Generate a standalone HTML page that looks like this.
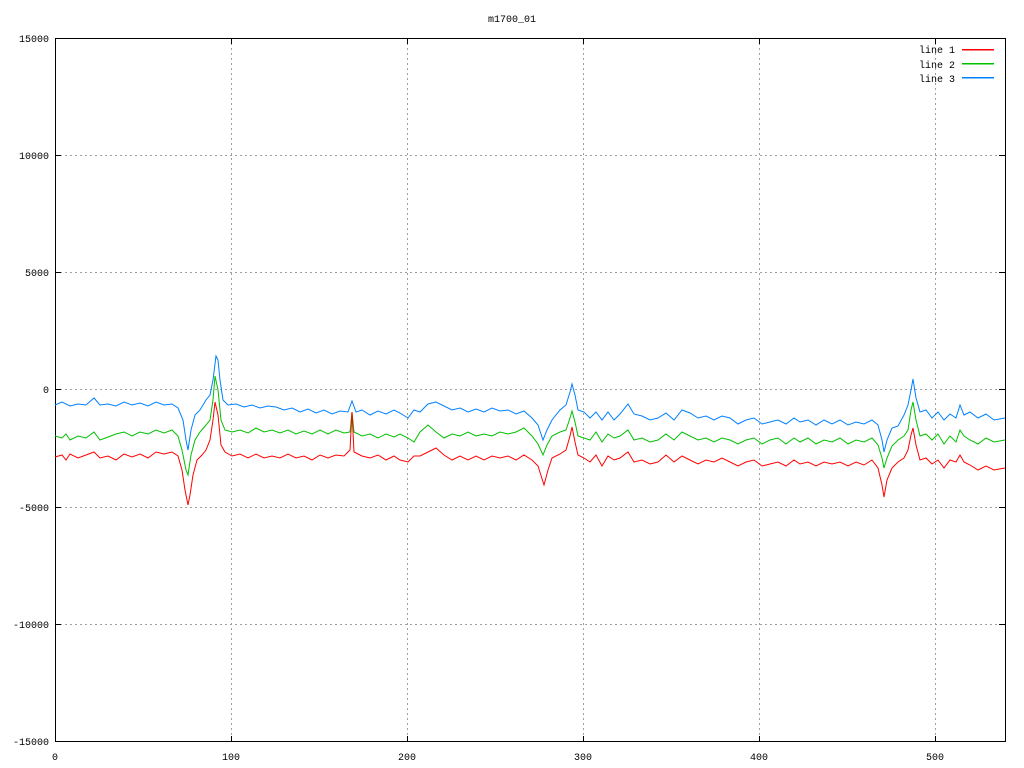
<!DOCTYPE html>
<html><head><meta charset="utf-8"><style>
html,body{margin:0;padding:0;background:#fff;}
svg{display:block}
text{font-family:"Liberation Mono","DejaVu Sans Mono",monospace;font-size:10px;fill:#000}
</style></head><body>
<svg width="1024" height="768" viewBox="0 0 1024 768">
<rect width="1024" height="768" fill="#fff"/>
<g stroke="#a0a0a0" stroke-dasharray="2,3" stroke-width="1">
<line x1="55" y1="155.5" x2="1005" y2="155.5"/>
<line x1="55" y1="272.5" x2="1005" y2="272.5"/>
<line x1="55" y1="389.5" x2="1005" y2="389.5"/>
<line x1="55" y1="507.5" x2="1005" y2="507.5"/>
<line x1="55" y1="624.5" x2="1005" y2="624.5"/>
<line x1="231.5" y1="38" x2="231.5" y2="742"/>
<line x1="407.5" y1="38" x2="407.5" y2="742"/>
<line x1="583.5" y1="38" x2="583.5" y2="742"/>
<line x1="759.5" y1="38" x2="759.5" y2="742"/>
<line x1="935.5" y1="38" x2="935.5" y2="742"/>
</g>
<rect x="55.5" y="38.5" width="950" height="703" fill="none" stroke="#000"/>
<g stroke="#000">
<path d="M55 155.5h6M55 272.5h6M55 389.5h6M55 507.5h6M55 624.5h6M1005 155.5h-6M1005 272.5h-6M1005 389.5h-6M1005 507.5h-6M1005 624.5h-6M231.5 742v-6M407.5 742v-6M583.5 742v-6M759.5 742v-6M935.5 742v-6M231.5 38v6M407.5 38v6M583.5 38v6M759.5 38v6M935.5 38v6"/>
</g>
<text x="512" y="22" text-anchor="middle">m1700_01</text>
<g text-anchor="end">
<text x="49" y="42">15000</text>
<text x="49" y="159">10000</text>
<text x="49" y="276">5000</text>
<text x="49" y="393">0</text>
<text x="49" y="511">-5000</text>
<text x="49" y="628">-10000</text>
<text x="49" y="745">-15000</text>
<text x="955" y="53">line 1</text>
<text x="955" y="68">line 2</text>
<text x="955" y="82">line 3</text>
</g>
<g text-anchor="middle">
<text x="55" y="760">0</text>
<text x="231" y="760">100</text>
<text x="407" y="760">200</text>
<text x="583" y="760">300</text>
<text x="759" y="760">400</text>
<text x="935" y="760">500</text>
</g>
<rect x="962" y="49" width="32" height="1.5" fill="#ff0000"/>
<rect x="962" y="63" width="32" height="1.5" fill="#00c000"/>
<rect x="962" y="77" width="32" height="1.5" fill="#0080ff"/>
<g fill="none" stroke-width="1" stroke-linejoin="miter">
<polyline stroke="#0080ff" points="55,405 62,402 70,406 78,404 86,405 94,398 100,405 108,404 116,406 124,402 132,405 140,403 148,406 156,402 164,405 172,404 178,408 183,420 186,440 188,450 191,430 195,415 200,410 206,400 210,395 213,380 216,356 218,360 220,380 223,400 228,405 236,404 244,407 252,405 260,408 268,406 276,407 284,410 292,408 300,412 308,409 316,413 324,410 332,414 340,411 348,412 352,401 356,412 362,410 370,415 378,411 386,414 394,410 400,413 408,418 414,410 420,412 428,404 436,402 444,406 452,410 460,408 468,412 476,409 484,412 492,408 500,411 508,410 516,414 524,411 532,418 538,425 543,440 547,430 552,420 560,410 566,405 570,392 572,384 575,395 578,410 584,412 590,418 596,412 602,420 608,412 614,420 620,414 628,404 634,414 642,416 650,420 658,418 666,413 674,420 682,410 690,413 698,418 706,416 714,420 722,416 730,418 738,424 746,420 754,418 762,424 770,422 778,420 786,424 794,418 800,422 808,420 816,425 824,420 832,424 840,420 848,425 856,422 864,424 872,420 878,425 882,440 884,452 887,440 892,428 898,426 904,415 908,405 911,390 913,379 916,398 920,412 926,410 932,418 938,412 944,420 950,414 956,418 960,405 964,415 970,412 978,418 986,414 994,420 1005,418"/>
<polyline stroke="#00c000" points="55,436 62,438 66,434 70,440 78,436 86,438 94,432 100,440 108,437 116,434 124,432 132,436 140,432 148,434 156,430 164,433 172,430 178,436 182,450 186,470 188,475 191,455 195,440 200,432 206,425 210,420 213,400 215,376 218,390 221,420 225,430 232,432 240,430 248,433 256,428 264,432 272,430 280,433 288,430 296,434 304,431 312,434 320,430 328,434 336,430 344,433 350,432 352,412 354,432 362,436 370,434 378,438 386,434 394,437 400,434 408,438 414,442 420,432 428,425 436,432 444,438 452,434 460,436 468,432 476,436 484,434 492,436 500,432 508,434 516,432 524,428 532,436 538,444 543,455 547,445 552,436 560,432 566,430 570,418 572,411 575,422 578,436 584,438 590,440 596,432 602,442 608,434 614,438 620,436 628,430 634,440 642,438 650,442 658,440 666,434 674,440 682,432 690,436 698,440 706,438 714,442 722,438 730,440 738,444 746,440 754,438 762,444 770,440 778,438 786,444 794,438 800,442 808,438 816,444 824,440 832,442 840,438 848,444 856,440 864,442 872,438 878,445 882,458 884,468 887,458 892,446 898,440 904,436 908,430 911,410 913,402 916,420 920,436 926,434 932,440 938,434 944,444 950,436 956,442 960,430 964,436 970,440 978,444 986,438 994,442 1005,440"/>
<polyline stroke="#ff0000" points="55,457 62,455 66,460 70,454 78,458 86,455 94,452 100,458 108,456 116,460 124,454 132,457 140,454 148,458 156,452 164,454 172,452 178,456 182,470 185,490 188,505 190,495 193,475 197,460 202,455 206,450 210,440 213,420 215,402 218,415 221,445 225,452 232,456 240,454 248,458 256,454 264,458 272,456 280,458 288,454 296,458 304,456 312,460 320,455 328,458 336,455 344,456 350,450 352,412 354,452 362,456 370,458 378,455 386,460 394,456 400,460 408,462 414,456 420,456 428,452 436,448 444,455 452,460 460,456 468,460 476,456 484,460 492,456 500,458 508,456 516,460 524,455 532,460 538,466 544,485 548,470 552,458 560,454 566,450 570,436 572,427 575,442 578,455 584,458 590,462 596,455 602,466 608,456 614,460 620,458 628,452 634,462 642,460 650,464 658,462 666,455 674,462 682,456 690,460 698,464 706,460 714,462 722,458 730,462 738,466 746,462 754,460 762,466 770,464 778,462 786,466 794,460 800,464 808,462 816,466 824,462 832,464 840,462 848,466 856,462 864,465 872,460 878,468 882,485 884,497 887,480 892,468 898,462 904,458 908,450 911,435 913,428 916,445 920,460 926,458 932,464 938,460 944,468 950,460 956,462 960,455 964,462 970,465 978,470 986,466 994,470 1005,468"/>
</g>
</svg>
</body></html>
